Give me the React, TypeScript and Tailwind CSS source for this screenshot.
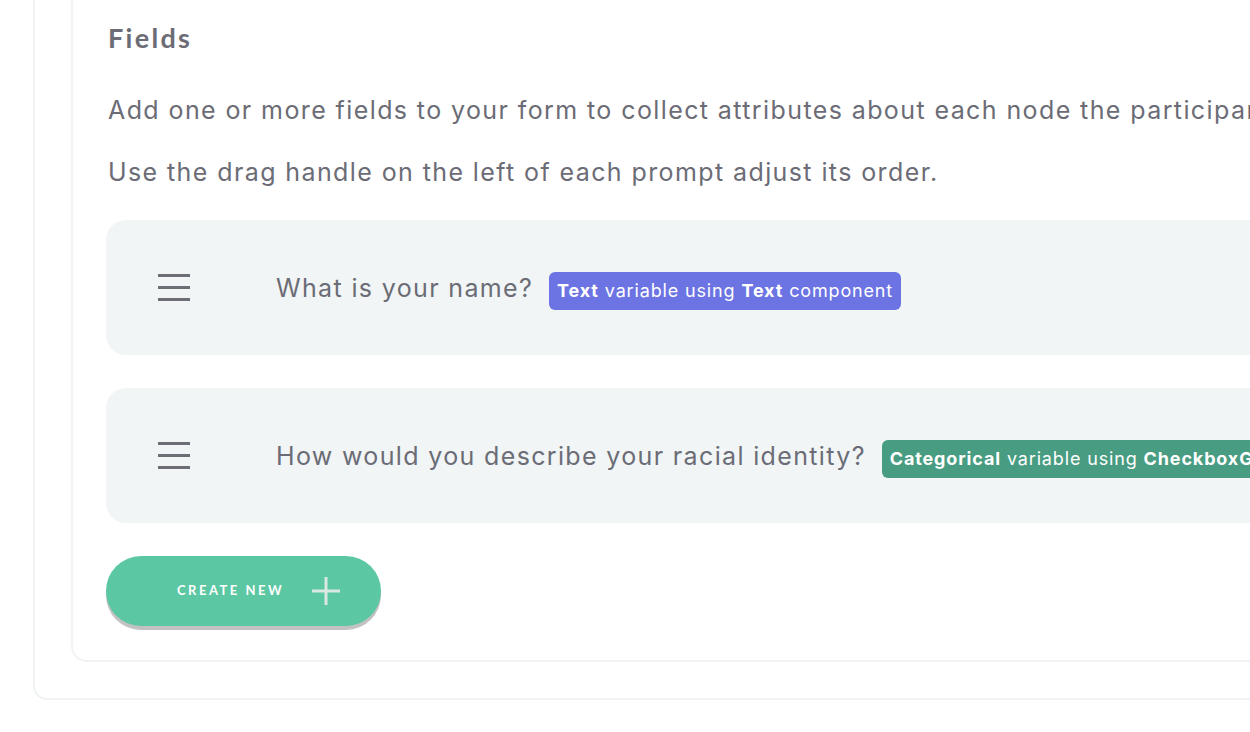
import React from 'react'

const Handle = () => (
    <div className='flex flex-col gap-[9px] w-8'>
        <span className='block h-[3px] w-8 bg-[#6c6d75]' />
        <span className='block h-[3px] w-8 bg-[#6c6d75]' />
        <span className='block h-[3px] w-8 bg-[#6c6d75]' />
    </div>
)

type FieldProps = {
    label: string
    variableType: string
    component: string
    badgeColor: string
}

const FieldCard = ({ label, variableType, component, badgeColor }: FieldProps) => (
    <div className='h-[135px] rounded-[20px] bg-[#f1f5f6] flex items-center pl-[52px] whitespace-nowrap'>
        <Handle />
        <span className='ml-[86px] mt-[2px] text-[25px] tracking-[1.35px] text-[#6b6c75]'>{label}</span>
        <span className={`ml-[16px] mt-[6px] rounded-md px-2 h-[38px] flex items-center text-[18px] tracking-[0.85px] text-white ${badgeColor}`}>
            <b className='font-bold'>{variableType}</b>
            <span className='ml-[6px]'>variable using</span>
            <b className='font-bold ml-[6px]'>{component}</b>
            <span className='ml-[6px]'>component</span>
        </span>
    </div>
)

const App = () => {
    return (
        <div className='w-[1250px] h-[732px] overflow-hidden bg-white font-["Inter",sans-serif]'>
            <div className='ml-[33px] w-[1400px] border-2 border-t-0 border-[#f0f3f4] rounded-b-[14px] pl-[36px] pb-[36px]'>
                <div className='border-2 border-t-0 border-[#f0f3f4] rounded-b-[16px] pl-[33px] pb-[34px]'>
                    <h2 className='pt-[22px] text-[27px] font-bold tracking-[2.3px] text-[#6b6c75] font-["Lato",sans-serif] pl-[2px] leading-[32px]'>Fields</h2>
                    <p className='mt-[40px] text-[25px] tracking-[1.4px] leading-[32px] text-[#6b6c75] pl-[2px] whitespace-nowrap'>Add one or more fields to your form to collect attributes about each node the participant creates.</p>
                    <p className='mt-[30px] text-[25px] tracking-[1.4px] leading-[32px] text-[#6b6c75] pl-[2px]'>Use the drag handle on the left of each prompt adjust its order.</p>
                    <div className='mt-[32px] flex flex-col gap-[33px]'>
                        <FieldCard label='What is your name?' variableType='Text' component='Text' badgeColor='bg-[#6c73e3]' />
                        <FieldCard label='How would you describe your racial identity?' variableType='Categorical' component='CheckboxGroup' badgeColor='bg-[#479c81]' />
                    </div>
                    <button className='mt-[33px] w-[275px] h-[70px] rounded-full bg-[#5bc7a3] shadow-[0_4px_0_#c2c2c2] flex items-center pl-[71px]'>
                        <span className='text-[13px] font-bold tracking-[2.5px] text-white font-["Lato",sans-serif]'>CREATE NEW</span>
                        <svg className='ml-[26px]' width='32' height='32' viewBox='0 0 32 32'>
                            <path d='M16 2v28M2 16h28' stroke='#d9e9e2' strokeWidth='3' fill='none' />
                        </svg>
                    </button>
                </div>
            </div>
        </div>
    )
}

export default App
